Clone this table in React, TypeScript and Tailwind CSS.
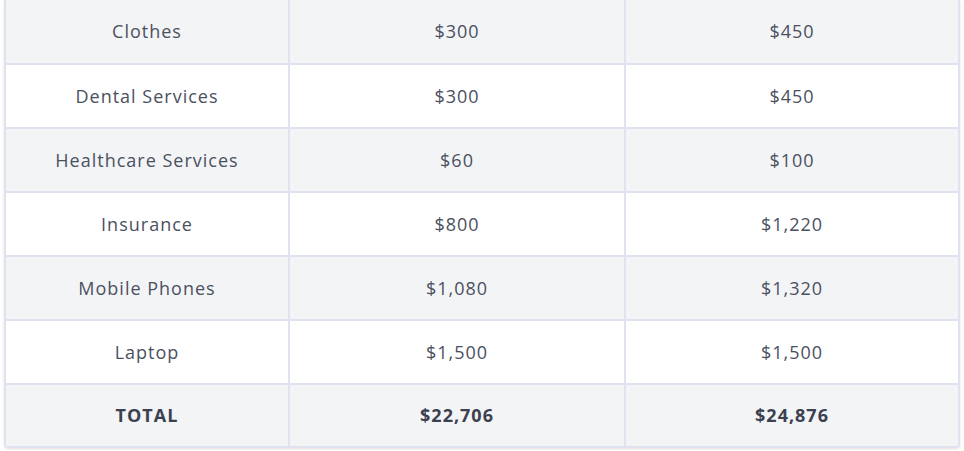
const rows = [
  { name: "Clothes", low: "$300", high: "$450" },
  { name: "Dental Services", low: "$300", high: "$450" },
  { name: "Healthcare Services", low: "$60", high: "$100" },
  { name: "Insurance", low: "$800", high: "$1,220" },
  { name: "Mobile Phones", low: "$1,080", high: "$1,320" },
  { name: "Laptop", low: "$1,500", high: "$1,500" },
];

function Cell({ children, last, bold }: { children: React.ReactNode; last?: boolean; bold?: boolean }) {
  return (
    <div
      className={
        "flex items-center justify-center " +
        (last ? "" : "border-r-2 border-[#dfe3f0] ") +
        (bold ? "font-bold text-[#3b4150]" : "text-[#4b5060]")
      }
    >
      {children}
    </div>
  );
}

export default function App() {
  return (
    <div className="min-h-screen bg-white" style={{ fontFamily: '"Open Sans", "Noto Sans", sans-serif' }}>
      <div className="ml-[4px] w-[956px] overflow-hidden rounded-b-[4px] border-x-2 border-b-2 border-[#dfe3f0] text-[18px] tracking-[1px] shadow-sm">
        {rows.map((r, i) => (
          <div
            key={r.name}
            className={
              "grid grid-cols-[284px_336px_332px] border-b-2 border-[#dfe3f0] " +
              (i === 0 ? "h-[65px] " : "h-[64px] ") +
              (i % 2 === 0 ? "bg-[#f3f4f6]" : "bg-white")
            }
          >
            <Cell>{r.name}</Cell>
            <Cell>{r.low}</Cell>
            <Cell last>{r.high}</Cell>
          </div>
        ))}
        <div className="grid h-[61px] grid-cols-[284px_336px_332px] bg-[#f3f4f6]">
          <Cell bold>TOTAL</Cell>
          <Cell bold>$22,706</Cell>
          <Cell bold last>$24,876</Cell>
        </div>
      </div>
    </div>
  );
}
